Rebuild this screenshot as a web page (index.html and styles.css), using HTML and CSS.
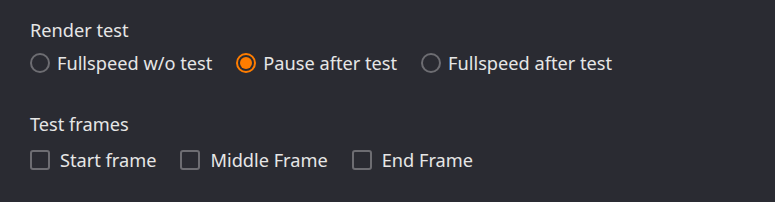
FILE: index.html
```html
<!DOCTYPE html>
<html lang="en">
<head>
    <meta charset="UTF-8">
    <meta name="viewport" content="width=device-width, initial-scale=1.0">
    <title>Test settings</title>
    <link rel="stylesheet" href="styles.css">
</head>
<body>

<div class="panel">

    <!-- Render test mode -->
    <div class="group">
        <div class="group-title">Render test</div>
        <div class="options radios">
            <label class="option">
                <span class="radio"></span>
                <span>Fullspeed w/o test</span>
            </label>
            <label class="option">
                <span class="radio checked"></span>
                <span>Pause after test</span>
            </label>
            <label class="option">
                <span class="radio"></span>
                <span>Fullspeed after test</span>
            </label>
        </div>
    </div>

    <!-- Frames to test -->
    <div class="group">
        <div class="group-title">Test frames</div>
        <div class="options checks">
            <label class="option">
                <span class="checkbox"></span>
                <span>Start frame</span>
            </label>
            <label class="option">
                <span class="checkbox"></span>
                <span>Middle Frame</span>
            </label>
            <label class="option">
                <span class="checkbox"></span>
                <span>End Frame</span>
            </label>
        </div>
    </div>

</div>

</body>
</html>
```

FILE: styles.css
```css
html, body {
    margin: 0;
    height: 100%;
    background-color: #2a2b32;
}
body {
    font-family: "Noto Sans", "Open Sans", sans-serif;
    font-size: 18.2px;
    color: #e6e6e6;
}
.panel {
    padding: 18px 30px 0;
}
.group-title {
    line-height: 24px;
    margin-bottom: 9px;
}
.group {
    margin-bottom: 37px;
}
.group:last-child {
    margin-bottom: 0;
}
.options {
    display: flex;
    gap: 24px;
    line-height: 24px;
}
/* collapses with the title's bottom margin */
.checks {
    margin-top: 12px;
}
.option {
    display: flex;
    align-items: center;
}
.radios .option {
    gap: 7px;
}
.checks .option {
    gap: 10px;
}
.radio {
    box-sizing: border-box;
    width: 20px;
    height: 20px;
    border: 2px solid #6d6d72;
    border-radius: 50%;
    position: relative;
}
.radio.checked {
    border-color: #ff7d00;
}
.radio.checked::after {
    content: "";
    position: absolute;
    left: 2px;
    top: 2px;
    width: 12px;
    height: 12px;
    border-radius: 50%;
    background-color: #ff7d00;
}
.checkbox {
    box-sizing: border-box;
    width: 20px;
    height: 20px;
    border: 2px solid #6d6d72;
    border-radius: 3px;
}
```
